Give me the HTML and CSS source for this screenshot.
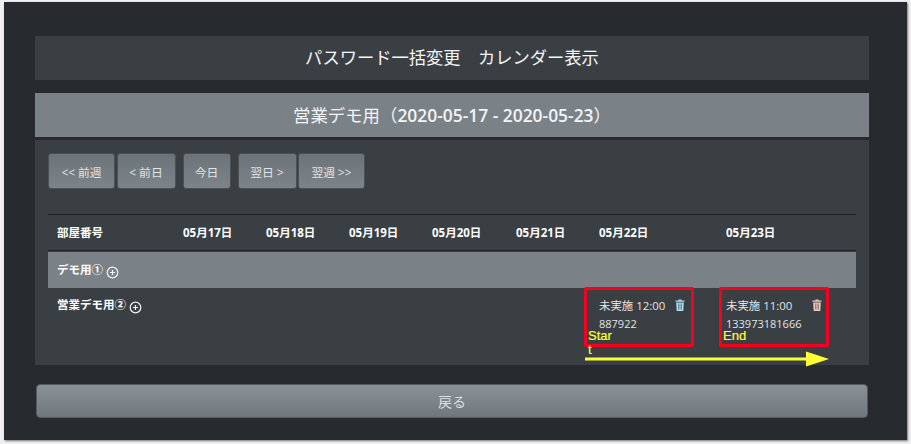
FILE: index.html
```html
<!DOCTYPE html>
<html lang="ja">
<head>
<meta charset="utf-8">
<title>カレンダー表示</title>
<link rel="stylesheet" href="styles.css">
</head>
<body>
<main class="app">
  <h1 class="title">パスワード一括変更　カレンダー表示</h1>
  <section class="panel">
    <h2 class="panel-head">営業デモ用（<span class="range">2020-05-17 - 2020-05-23</span>）</h2>
    <div class="panel-body">
      <nav class="toolbar">
        <div class="group">
          <button class="btn w-prev-week">&lt;&lt; 前週</button>
          <button class="btn w-prev-day">&lt; 前日</button>
        </div>
        <button class="btn w-today">今日</button>
        <div class="group">
          <button class="btn w-prev-day">翌日 &gt;</button>
          <button class="btn w-prev-week">翌週 &gt;&gt;</button>
        </div>
      </nav>
      <div class="cal">
        <div class="cal-row cal-header">
          <div class="cell">部屋番号</div>
          <div class="cell">05月17日</div>
          <div class="cell">05月18日</div>
          <div class="cell">05月19日</div>
          <div class="cell">05月20日</div>
          <div class="cell">05月21日</div>
          <div class="cell">05月22日</div>
          <div class="cell">05月23日</div>
        </div>
        <div class="room-band">
          <span class="room">デモ用①</span>
          <svg class="plus" viewBox="0 0 14 14"><circle cx="7" cy="7" r="5.7"/><path d="M7 4.2v5.6M4.2 7h5.6"/></svg>
        </div>
        <div class="cal-row cal-body">
          <div class="cell room-cell">
            <span class="room">営業デモ用②</span>
            <svg class="plus" viewBox="0 0 14 14"><circle cx="7" cy="7" r="5.7"/><path d="M7 4.2v5.6M4.2 7h5.6"/></svg>
          </div>
          <div class="cell"></div><div class="cell"></div><div class="cell"></div><div class="cell"></div><div class="cell"></div>
          <div class="cell">
            <div class="slot-line"><span>未実施 12:00</span>
              <svg class="trash trash-blue" viewBox="0 0 10 12"><path fill-rule="evenodd" d="M3.500 1.500V.6h3v.9H9.500v1.200H.5V1.500zM1.200 3.400h7.600L8.300 12H1.700zM3.100 4.500v6h.5v-6zM4.750 4.500v6h.5v-6zM6.400 4.500v6h.5v-6z"/></svg>
            </div>
            <div class="slot-code">887922</div>
          </div>
          <div class="cell">
            <div class="slot-line slot-wide"><span>未実施 11:00</span>
              <svg class="trash trash-red" viewBox="0 0 10 12"><path fill-rule="evenodd" d="M3.500 1.500V.6h3v.9H9.500v1.200H.5V1.500zM1.200 3.400h7.600L8.300 12H1.700zM3.100 4.500v6h.5v-6zM4.750 4.500v6h.5v-6zM6.400 4.500v6h.5v-6z"/></svg>
            </div>
            <div class="slot-code">133973181666</div>
          </div>
        </div>
      </div>
    </div>
  </section>
  <button class="back">戻る</button>
</main>

<div class="mark mark-start"></div>
<div class="mark mark-end"></div>
<div class="note note-start">Star<br>t</div>
<div class="note note-end">End</div>
<svg class="arrow" viewBox="0 0 244 16" preserveAspectRatio="none"><path d="M0 6.500h221V.5l23 7.500-23 7.500v-6H0z"/></svg>
</body>
</html>
```
FILE: styles.css
```css
* { box-sizing: border-box; }
html, body { height: 100%; }
body {
  margin: 0;
  background: #f0f0f0;
  padding: 2px 4px 4px 4px;
  font-family: "Open Sans", "Noto Sans CJK JP", sans-serif;
  color: #fff;
  overflow: hidden;
}
.app {
  width: 903px;
  height: 438px;
  background: #272b30;
  padding: 34px 38px 0 31px;
  box-shadow: 1px 1px 2px #777;
}
.title {
  margin: 0 0 13px;
  height: 44px;
  background: #3a3f44;
  font-size: 17.300px;
  font-weight: 400;
  line-height: 44px;
  text-align: center;
  color: #f4f4f4;
}
.panel-head {
  margin: 0;
  height: 44px;
  background: #7a8288;
  font-size: 17.400px;
  font-weight: 400;
  line-height: 44px;
  text-align: center;
  color: #f4f4f4;
}
.range { font-weight: 600; }
.panel-body {
  margin-top: 3px;
  height: 225px;
  background: #3a3f44;
  padding: 13px 13px 0;
}
.toolbar { display: flex; gap: 7px; height: 36px; }
.group { display: flex; gap: 1.500px; }
.btn {
  height: 36px;
  padding: 0;
  border: 1px solid #4c5156;
  border-radius: 3px;
  background: linear-gradient(#6c7379, #7c848a);
  color: #e2e3e4;
  font: 400 11.800px "Open Sans", "Noto Sans CJK JP", sans-serif;
}
.w-prev-week { width: 67px; }
.w-prev-day { width: 59px; }
.w-today { width: 48px; }
.cal {
  margin-top: 25px;
  border-top: 1px solid #1f2226;
  font-size: 11.500px;
}
.cal-row {
  display: grid;
  grid-template-columns: 126px 83px 83px 83px 84px 83px 127px 139px;
}
.cal-header {
  height: 36px;
  border-bottom: 1px solid #1f2226;
  font-weight: 700;
  line-height: 35px;
}
.cal-header .cell { padding-left: 9px; }
.room-band {
  height: 36px;
  margin-top: 1px;
  background: #7a8288;
  padding: 9px 0 0 9px;
  display: flex;
  align-items: flex-start;
  gap: 3px;
}
.room { font-size: 11.500px; font-weight: 700; line-height: 18px; }
.plus {
  width: 13px;
  height: 13px;
  margin-top: 5px;
  fill: none;
  stroke: #f2f2f2;
  stroke-width: 1.300;
}
.cal-body { padding-top: 8px; }
.cal-body .cell { padding-left: 9px; min-width: 0; }
.room-cell { display: flex; align-items: flex-start; gap: 3px; }
.slot-line {
  display: flex;
  align-items: center;
  gap: 10px;
  height: 18px;
  font-size: 11.400px;
  color: #e3e4e5;
  white-space: nowrap;
}
.slot-wide { gap: 20px; }
.trash { width: 10px; height: 12px; }
.trash-blue { fill: #a9dcef; }
.trash-red { fill: #f0c9b8; }
.slot-code { margin-top: 1px; height: 18px; font-size: 11px; line-height: 18px; color: #e3e4e5; }
.back {
  display: block;
  width: 832px;
  height: 34px;
  margin: 19px 0 0 1px;
  padding: 0;
  border: 1px solid #54595e;
  border-radius: 4px;
  background: linear-gradient(#8a9196, #70787e);
  color: #dcdedf;
  font: 400 14px "Open Sans", "Noto Sans CJK JP", sans-serif;
}
/* Annotations drawn over the screenshot */
.mark {
  position: absolute;
  top: 287px;
  width: 110px;
  height: 60px;
  border: 3px solid #f5001e;
  border-radius: 2px;
}
.mark-start { left: 584px; }
.mark-end { left: 718.500px; }
.note {
  position: absolute;
  color: #ffff33;
  font: 400 13px/14px "Liberation Sans", sans-serif;
  -webkit-text-stroke: 0.2px #ffff33;
}
.note-start { left: 588px; top: 329px; }
.note-end { left: 723px; top: 329px; }
.arrow {
  position: absolute;
  left: 585px;
  top: 351px;
  width: 244px;
  height: 16px;
  fill: #ffff33;
}
```
